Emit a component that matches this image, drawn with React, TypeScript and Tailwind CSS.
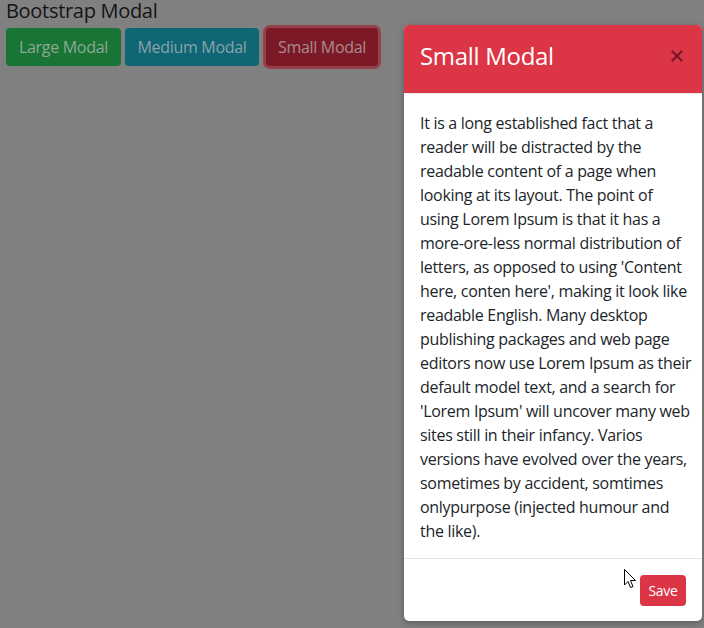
import React from "react";

const lines = [
  "It is a long established fact that a",
  "reader will be distracted by the",
  "readable content of a page when",
  "looking at its layout. The point of",
  "using Lorem Ipsum is that it has a",
  "more-ore-less normal distribution of",
  "letters, as opposed to using 'Content",
  "here, conten here', making it look like",
  "readable English. Many desktop",
  "publishing packages and web page",
  "editors now use Lorem Ipsum as their",
  "default model text, and a search for",
  "'Lorem Ipsum' will uncover many web",
  "sites still in their infancy. Varios",
  "versions have evolved over the years,",
  "sometimes by accident, somtimes",
  "onlypurpose (injected humour and",
  "the like).",
];

export default function App() {
  return (
    <div
      className="relative w-[704px] h-[628px] overflow-hidden bg-[#808080]"
      style={{ fontFamily: '"Open Sans", "Noto Sans", sans-serif' }}
    >
      <div className="flex items-start">
        <div className="flex flex-col pl-[6px]">
          <div className="text-[20px] leading-[22px] tracking-[-0.3px] text-[#141414] h-[28px]">Bootstrap Modal</div>
          <div className="flex items-center gap-[4px] tracking-[-0.3px]">
            <div className="h-[38px] w-[115px] rounded-[4px] bg-[#187535] flex items-center justify-center text-[16px] text-[#8fa896]">
              Large Modal
            </div>
            <div className="h-[38px] w-[134px] rounded-[4px] bg-[#0f6675] flex items-center justify-center text-[16px] text-[#8aa3a8]">
              Medium Modal
            </div>
            <div className="ml-[3px] h-[38px] w-[112px] rounded-[4px] bg-[#7b1a26] flex items-center justify-center text-[16px] text-[#a98a8e] shadow-[0_0_0_3px_#94414b]">
              Small Modal
            </div>
          </div>
        </div>
        <div className="ml-[26px] mt-[25px] w-[298px] rounded-[5px] bg-white shadow-[0_2px_6px_rgba(0,0,0,0.3)] overflow-hidden tracking-[-0.3px]">
          <div className="flex items-center justify-between bg-[#dc3545] px-[16px] pb-[6px] h-[69px] border-b border-[#e9e9e9]">
            <div className="text-[24px] leading-[36px] text-white">Small Modal</div>
            <svg width="12" height="12" viewBox="0 0 12 12" className="mr-[3px]">
              <path d="M1.5 1.5 L10.5 10.5 M10.5 1.5 L1.5 10.5" stroke="#6e1a23" strokeWidth="2" strokeLinecap="square" />
            </svg>
          </div>
          <div className="px-[16px] pt-[17px] pb-[15px] text-[16px] leading-[24px] text-[#212529]">
            {lines.map((l, i) => (
              <div key={i} className="whitespace-nowrap">{l}</div>
            ))}
          </div>
          <div className="flex justify-end border-t border-[#e5e5e5] px-[16px] pt-[16px] pb-[15px]">
            <div className="h-[31px] w-[46px] rounded-[4px] bg-[#dc3545] text-white text-[14px] flex items-center justify-center">Save</div>
          </div>
        </div>
      </div>
      <svg className="absolute left-[624px] top-[569px]" width="13" height="20" viewBox="0 0 13 20">
        <path d="M0.5 0.5 L0.5 16 L4 12.5 L6.5 18.5 L9 17.5 L6.5 11.5 L11.5 11.5 Z" fill="white" stroke="black" strokeWidth="1" strokeLinejoin="round" />
      </svg>
    </div>
  );
}
